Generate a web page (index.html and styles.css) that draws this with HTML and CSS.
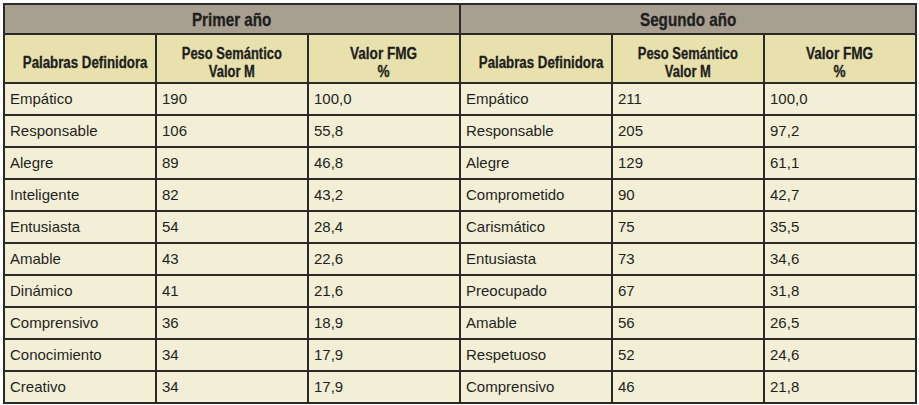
FILE: index.html
```html
<!DOCTYPE html>
<html lang="es">
<head>
<meta charset="utf-8">
<link rel="stylesheet" href="styles.css">
</head>
<body>
<table class="tbl">
  <colgroup>
    <col class="c"><col class="c"><col class="c"><col class="c"><col class="c"><col class="c">
  </colgroup>
  <thead>
    <tr class="year">
      <th colspan="3"><span class="cond">Primer año</span></th>
      <th colspan="3"><span class="cond">Segundo año</span></th>
    </tr>
    <tr class="sub">
      <th><span class="cond w1">Palabras Definidora</span></th>
      <th><span class="cond w2">Peso Semántico<br>Valor M</span></th>
      <th><span class="cond w3">Valor FMG<br>%</span></th>
      <th><span class="cond w1">Palabras Definidora</span></th>
      <th><span class="cond w2">Peso Semántico<br>Valor M</span></th>
      <th><span class="cond w3">Valor FMG<br>%</span></th>
    </tr>
  </thead>
  <tbody>
    <tr><td>Empático</td><td>190</td><td>100,0</td><td>Empático</td><td>211</td><td>100,0</td></tr>
    <tr><td>Responsable</td><td>106</td><td>55,8</td><td>Responsable</td><td>205</td><td>97,2</td></tr>
    <tr><td>Alegre</td><td>89</td><td>46,8</td><td>Alegre</td><td>129</td><td>61,1</td></tr>
    <tr><td>Inteligente</td><td>82</td><td>43,2</td><td>Comprometido</td><td>90</td><td>42,7</td></tr>
    <tr><td>Entusiasta</td><td>54</td><td>28,4</td><td>Carismático</td><td>75</td><td>35,5</td></tr>
    <tr><td>Amable</td><td>43</td><td>22,6</td><td>Entusiasta</td><td>73</td><td>34,6</td></tr>
    <tr><td>Dinámico</td><td>41</td><td>21,6</td><td>Preocupado</td><td>67</td><td>31,8</td></tr>
    <tr><td>Comprensivo</td><td>36</td><td>18,9</td><td>Amable</td><td>56</td><td>26,5</td></tr>
    <tr><td>Conocimiento</td><td>34</td><td>17,9</td><td>Respetuoso</td><td>52</td><td>24,6</td></tr>
    <tr><td>Creativo</td><td>34</td><td>17,9</td><td>Comprensivo</td><td>46</td><td>21,8</td></tr>
  </tbody>
</table>
</body>
</html>
```
FILE: styles.css
```css
html, body {
  margin: 0;
  padding: 0;
  background: #ffffff;
}
body {
  padding: 3px 0 0 3px;
  font-family: "Liberation Sans", Arial, sans-serif;
  color: #1f1f1f;
}
.tbl {
  border-collapse: collapse;
  table-layout: fixed;
  width: 911px;
  border: 2px solid #242424;
}
.c { width: 152px; }
.tbl th, .tbl td {
  border: 2px solid #2a2a2a;
  padding: 0 5px;
}
.tbl th {
  font-family: "Liberation Sans", Arial, sans-serif;
  font-weight: bold;
  text-align: center;
  color: #1e1e1e;
  white-space: nowrap;
}
.cond {
  display: inline-block;
  transform: scaleX(0.8);
  -webkit-text-stroke: 0.3px #1e1e1e;
}
.w1 { transform: scaleX(0.83); }
.w2 { transform: scaleX(0.81); }
.w3 { transform: scaleX(0.85); }
.year th {
  background: #a89f90;
  height: 27px;
  font-size: 19px;
  line-height: 20px;
  padding-top: 1px;
  padding-bottom: 0;
}
.sub th {
  background: #e8e1ad;
  height: 39px;
  font-size: 16px;
  line-height: 18px;
  padding-top: 8px;
  padding-bottom: 0;
}
.tbl td {
  background: #f3efd7;
  height: 30px;
  font-size: 15px;
  line-height: 18px;
  text-align: left;
}
```
